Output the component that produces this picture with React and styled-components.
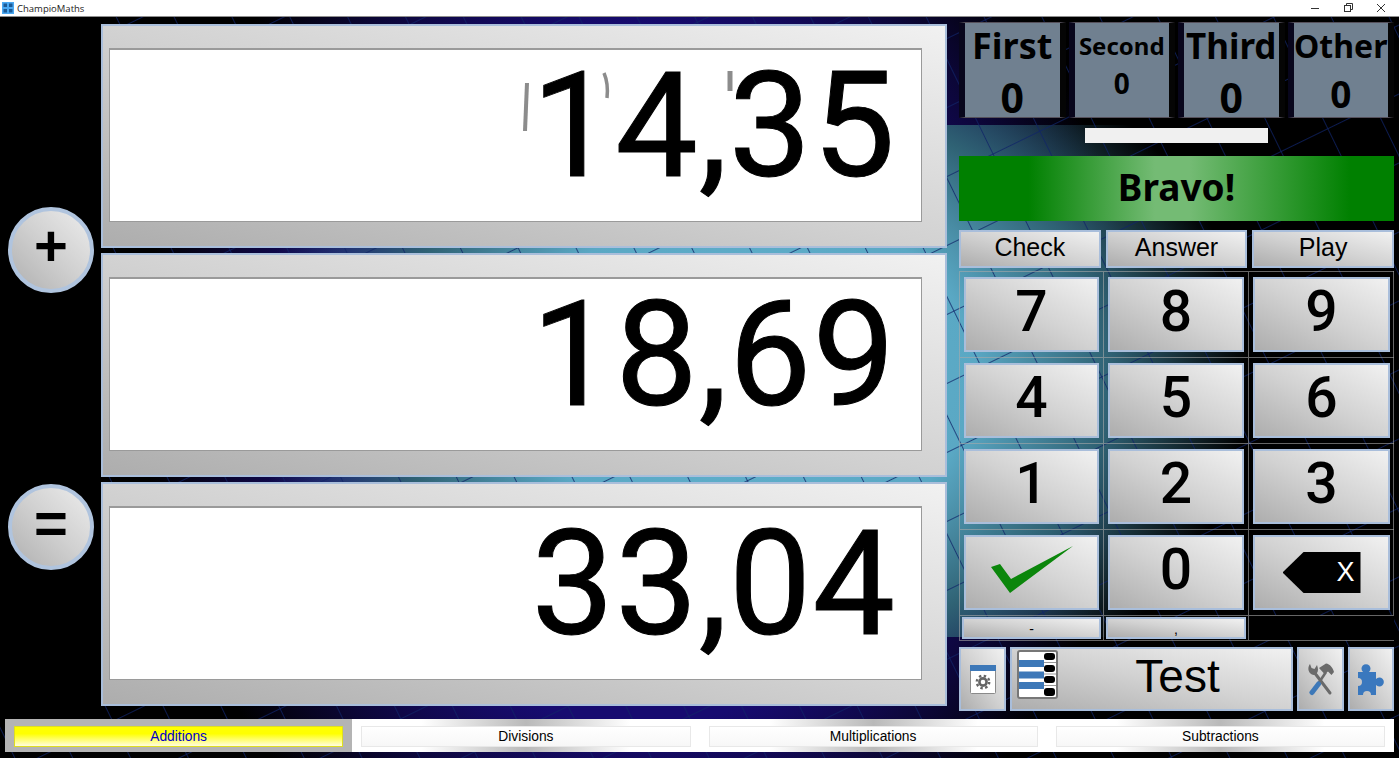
import React from 'react'
import styled, { createGlobalStyle, css } from 'styled-components'

const GlobalStyle = createGlobalStyle`
  * { box-sizing: border-box; }
  html, body { margin: 0; padding: 0; height: 100%; background: #000; overflow: hidden; }
  body { font-family: "Liberation Sans", Arial, sans-serif; }
`

const chrome = css`
  border: 2px solid #a9bedb;
  background: linear-gradient(to top right, #adadad 0%, #d2d2d2 50%, #f1f1f1 100%);
  color: #000;
  display: flex;
  align-items: center;
  justify-content: center;
  font-family: "Liberation Sans", Arial, sans-serif;
  padding: 0;
`

const Window = styled.div`
  width: 1399px;
  height: 758px;
  display: flex;
  flex-direction: column;
  overflow: hidden;
`

const TitleBar = styled.div`
  height: 17px;
  flex: none;
  background: #fff;
  border-bottom: 1px solid #8f8f8f;
  display: flex;
  align-items: center;
  padding-left: 2px;
`

const AppName = styled.span`
  font: 9.5px "Open Sans", sans-serif;
  color: #222;
  margin-left: 3px;
`

const WindowControls = styled.div`
  margin-left: auto;
  display: flex;
  gap: 23px;
  padding-right: 13px;
  align-items: center;
`

const Desktop = styled.div`
  flex: 1;
  position: relative;
  display: flex;
  flex-direction: column;
  background:
    radial-gradient(ellipse 500px 386px at 750px 250px, #63b3cf 0%, #5aa8c4 45%, #2f6274 72%, rgba(20, 40, 70, 0) 100%) 0 108px / 100% 512px no-repeat,
    radial-gradient(ellipse 500px 560px at 640px 360px, #170b70 62%, rgba(15, 8, 70, 0.8) 82%, #000 100%);
`

const Wallpaper = styled.svg`
  position: absolute;
  inset: 0;
  width: 100%;
  height: 100%;
`

const Main = styled.div`
  position: relative;
  height: 702px;
  display: flex;
`

const OperatorRail = styled.div`
  width: 101px;
  flex: none;
  background: #000;
  display: flex;
  flex-direction: column;
  align-items: flex-start;
  gap: 191px;
  padding: 190px 0 0 8px;
`

const Operator = styled.div`
  width: 86px;
  height: 86px;
  border-radius: 50%;
  border: 4px solid #b0c4de;
  background: linear-gradient(to top right, #b0b0b0 0%, #d0d0d0 50%, #ececec 100%);
  display: flex;
  align-items: center;
  justify-content: center;
  font: 700 58px/1 "Liberation Sans", sans-serif;
  padding-bottom: 8px;
  color: #000;
`

const Panels = styled.div`
  width: 846px;
  flex: none;
  padding-top: 7px;
  display: flex;
  flex-direction: column;
  gap: 5px;
`

const Panel = styled.div`
  ${chrome}
  height: 224px;
  padding: 22px 23px 24px 6px;
  align-items: stretch;
`

const Display = styled.div`
  position: relative;
  flex: 1;
  background: #fff;
  border: 1px solid #9a9a9a;
  border-top-width: 2px;
  display: flex;
  align-items: center;
  justify-content: flex-end;
  padding: 0 25px 18px 0;
  font: 400 147px/1 Roboto, sans-serif;
  letter-spacing: 1px;
  -webkit-text-stroke: 1px #000;
  color: #000;
`

const GhostMarks = styled.svg`
  position: absolute;
  left: 410px;
  top: 19px;
`

const Side = styled.div`
  width: 435px;
  margin-left: 12px;
  flex: none;
  padding-top: 5px;
  display: flex;
  flex-direction: column;
`

const Scores = styled.div`
  display: grid;
  grid-template-columns: repeat(4, 1fr);
  gap: 3px;
  height: 96px;
`

const ScoreBox = styled.div`
  background: #708090;
  border: 1px solid #55505a;
  border-left: 6px solid #08061c;
  border-right: 6px solid #050505;
  display: flex;
  flex-direction: column;
  align-items: center;
  padding-top: 3px;
  font-family: "Noto Sans", sans-serif;
  font-weight: 700;
  color: #000;
`

const ScoreLabel = styled.div`
  font-size: ${p => p.$size}px;
  line-height: 40px;
  white-space: nowrap;
`

const ScoreValue = styled.div`
  font-size: ${p => p.$size}px;
  line-height: 40px;
  margin-top: ${p => p.$offset}px;
`

const Progress = styled.div`
  width: 183px;
  height: 15px;
  margin: 10px auto 0;
  background: #f0f0f0;
`

const Banner = styled.div`
  height: 65px;
  margin-top: 13px;
  padding-bottom: 5px;
  background: linear-gradient(90deg, #008000 0%, #008000 16%, #74bb74 45%, #74bb74 53%, #008000 90%, #008000 100%);
  display: flex;
  align-items: center;
  justify-content: center;
  font: 700 37px "Noto Sans", sans-serif;
  color: #000;
`

const Actions = styled.div`
  display: grid;
  grid-template-columns: repeat(3, 1fr);
  gap: 5px;
  margin-top: 9px;
  height: 38px;
`

const ActionButton = styled.button`
  ${chrome}
  font-size: 25px;
  padding-bottom: 4px;
`

const Keypad = styled.div`
  margin-top: 3px;
  display: grid;
  grid-template-columns: 144px 145px 146px;
  grid-template-rows: repeat(4, 86px) 25px;
  border-right: 1px solid rgba(170, 170, 170, 0.6);
  border-bottom: 1px solid rgba(170, 170, 170, 0.6);
`

const KeyCell = styled.div`
  border-top: 1px solid rgba(170, 170, 170, 0.6);
  border-left: 1px solid rgba(170, 170, 170, 0.6);
  padding: ${p => (p.$small ? '1px 2px 1px 2px' : '5px 4px 5px 4px')};
  background: ${p => (p.$empty ? '#000' : 'transparent')};
  display: flex;
`

const Key = styled.button`
  ${chrome}
  flex: 1;
  font: 500 57px Roboto, sans-serif;
  padding-bottom: 6px;
`

const SmallKey = styled.button`
  ${chrome}
  flex: 1;
  font-size: 14px;
  align-items: flex-end;
`

const BackspaceMark = styled.div`
  width: 78px;
  height: 41px;
  margin-top: 6px;
  background: #000;
  clip-path: polygon(0 50%, 27% 0, 100% 0, 100% 100%, 27% 100%);
  color: #fff;
  font: 400 27px "Liberation Sans", sans-serif;
  display: flex;
  align-items: center;
  justify-content: flex-end;
  padding-right: 6px;
`

const Toolbar = styled.div`
  margin-top: 6px;
  height: 62px;
  display: grid;
  grid-template-columns: 47px 1fr 47px 46px;
  gap: 4px;
`

const ToolButton = styled.button`
  ${chrome}
`

const TestButton = styled.button`
  ${chrome}
  position: relative;
  font-size: 46px;
  padding: 0 0 6px 52px;
`

const TestIcon = styled.svg`
  position: absolute;
  left: 5px;
  top: 1px;
`

const TabBar = styled.div`
  position: relative;
  display: grid;
  grid-template-columns: repeat(4, 1fr);
  height: 33px;
  margin: 0 5px 0 5px;
`

const Tab = styled.div`
  padding: 7px 9px 5px;
  display: flex;
  background: ${p => (p.$active
    ? '#b4b4b4'
    : 'linear-gradient(90deg, #fff 0%, #fff 20%, #b9b9b9 50%, #fff 80%, #fff 100%)')};
`

const TabLabel = styled.div`
  flex: 1;
  display: flex;
  align-items: center;
  justify-content: center;
  font-size: 13.8px;
  padding-bottom: 1px;
  color: ${p => (p.$active ? '#0000c8' : '#000')};
  border: 1px solid ${p => (p.$active ? '#dede20' : '#e8e8e8')};
  background: ${p => (p.$active
    ? 'linear-gradient(180deg, #ffff00 0%, #ffff00 35%, #fffde0 100%)'
    : 'linear-gradient(180deg, #fff 0%, #f7f7f7 100%)')};
`

const keyRows = ['7', '8', '9', '4', '5', '6', '1', '2', '3']
const tabs = ['Additions', 'Divisions', 'Multiplications', 'Subtractions']

const AppIcon = () => (
  <svg width="12" height="12" viewBox="0 0 12 12">
    <rect width="12" height="12" fill="#4aa8f2" />
    <rect x="1.5" y="1.5" width="3.5" height="3.5" fill="#1c5a96" />
    <rect x="7" y="1.5" width="3.5" height="3.5" fill="#1c5a96" />
    <rect x="1.5" y="7" width="3.5" height="3.5" fill="#1c5a96" />
    <rect x="7" y="7" width="3.5" height="3.5" fill="#1c5a96" />
  </svg>
)

const CheckMark = () => (
  <svg width="82" height="47" viewBox="0 0 82 47">
    <polygon points="0,21 9,18 20,33 82,0 19,47" fill="#0b860b" />
  </svg>
)

const SettingsIcon = () => (
  <svg width="26" height="29" viewBox="0 0 26 29">
    <rect x="0.5" y="0.5" width="25" height="28" rx="1" fill="#fff" stroke="#8a8a8a" />
    <rect x="0" y="0" width="26" height="6" fill="#3d78b8" />
    <circle cx="13" cy="17" r="3.6" fill="none" stroke="#666" strokeWidth="2.6" />
    <circle cx="13" cy="17" r="6.2" fill="none" stroke="#666" strokeWidth="2.4" strokeDasharray="2.4 2.47" />
  </svg>
)

const ListIcon = () => (
  <TestIcon width="41" height="49" viewBox="0 0 41 49">
    <rect x="1" y="1" width="39" height="47" rx="2" fill="#fff" stroke="#777" strokeWidth="2" />
    <rect x="2" y="10" width="25" height="7" fill="#3d78b8" />
    <rect x="2" y="21.5" width="25" height="7" fill="#3d78b8" />
    <rect x="2" y="32" width="25" height="7" fill="#3d78b8" />
    <path d="M27 12.5H39M27 24H39M27 35.5H39" stroke="#999" strokeWidth="1" />
    <rect x="27" y="3" width="11" height="7" rx="3" fill="#000" />
    <rect x="27" y="15" width="11" height="7" rx="3" fill="#000" />
    <rect x="27" y="26" width="11" height="7" rx="3" fill="#000" />
    <rect x="27" y="38" width="11" height="8" rx="3" fill="#000" />
  </TestIcon>
)

const ToolsIcon = () => (
  <svg width="26" height="33" viewBox="0 0 26 33">
    <path d="M6 9L22 30" stroke="#6a6a6a" strokeWidth="3" strokeLinecap="round" />
    <path d="M2 1C-1 5 0 11 6 12C10 11 11 7 9 2L6.5 6L3.5 5Z" fill="#6a6a6a" />
    <path d="M18 9L10 21" stroke="#6a6a6a" strokeWidth="2.6" />
    <path d="M10.5 21L4 29.5" stroke="#3d78b8" strokeWidth="5" strokeLinecap="round" />
    <path d="M11 5L18 0.5C22 1 25 5 26 9L23.5 12L20 8.5L16.5 11Z" fill="#6a6a6a" />
  </svg>
)

const PuzzleIcon = () => (
  <svg width="26" height="33" viewBox="0 0 26 33">
    <path
      d="M0 9H5A4.5 4.5 0 1 1 11 9H18V16A4.5 4.5 0 1 1 18 22V32H13A4 4 0 1 0 5 32H0V23A4 4 0 1 0 0 15Z"
      fill="#3a78be"
    />
  </svg>
)

const App = () => {
  return (
    <Window>
      <GlobalStyle />
      <TitleBar>
        <AppIcon />
        <AppName>ChampioMaths</AppName>
        <WindowControls>
          <svg width="10" height="10" viewBox="0 0 10 10">
            <path d="M1 5.5H9" stroke="#333" />
          </svg>
          <svg width="10" height="10" viewBox="0 0 10 10" fill="none" stroke="#333">
            <rect x="1.5" y="2.5" width="6" height="6" />
            <path d="M3.5 2.5V0.5H9.5V6.5H7.5" />
          </svg>
          <svg width="10" height="10" viewBox="0 0 10 10">
            <path d="M1 1L9 9M9 1L1 9" stroke="#333" />
          </svg>
        </WindowControls>
      </TitleBar>

      <Desktop>
        <Wallpaper aria-hidden="true">
          <defs>
            <pattern id="floor" width="52" height="62" patternUnits="userSpaceOnUse" patternTransform="rotate(-26)">
              <path d="M0 0H52M0 0V62" stroke="#0f2468" strokeWidth="1.5" fill="none" />
            </pattern>
          </defs>
          <rect width="100%" height="100%" fill="url(#floor)" />
        </Wallpaper>

        <Main>
          <OperatorRail>
            <Operator>+</Operator>
            <Operator>=</Operator>
          </OperatorRail>

          <Panels>
            <Panel>
              <Display>
                <GhostMarks width="220" height="70" viewBox="0 0 220 70">
                  <path d="M7 14L5 62" stroke="#8c8c8c" strokeWidth="4" fill="none" />
                  <path d="M84 4C87 11 88 20 87 29" stroke="#8c8c8c" strokeWidth="3.5" fill="none" />
                  <path d="M210 2V22" stroke="#8c8c8c" strokeWidth="5" fill="none" />
                </GhostMarks>
                14,35
              </Display>
            </Panel>
            <Panel>
              <Display>18,69</Display>
            </Panel>
            <Panel>
              <Display>33,04</Display>
            </Panel>
          </Panels>

          <Side>
            <Scores>
              <ScoreBox>
                <ScoreLabel $size={36}>First</ScoreLabel>
                <ScoreValue $size={41} $offset={11}>0</ScoreValue>
              </ScoreBox>
              <ScoreBox>
                <ScoreLabel $size={24}>Second</ScoreLabel>
                <ScoreValue $size={28} $offset={-3}>0</ScoreValue>
              </ScoreBox>
              <ScoreBox>
                <ScoreLabel $size={35}>Third</ScoreLabel>
                <ScoreValue $size={41} $offset={11}>0</ScoreValue>
              </ScoreBox>
              <ScoreBox>
                <ScoreLabel $size={32}>Other</ScoreLabel>
                <ScoreValue $size={37} $offset={8}>0</ScoreValue>
              </ScoreBox>
            </Scores>

            <Progress />
            <Banner>Bravo!</Banner>

            <Actions>
              <ActionButton>Check</ActionButton>
              <ActionButton>Answer</ActionButton>
              <ActionButton>Play</ActionButton>
            </Actions>

            <Keypad>
              {keyRows.map(k => (
                <KeyCell key={k}>
                  <Key>{k}</Key>
                </KeyCell>
              ))}
              <KeyCell>
                <Key><CheckMark /></Key>
              </KeyCell>
              <KeyCell>
                <Key>0</Key>
              </KeyCell>
              <KeyCell>
                <Key><BackspaceMark>X</BackspaceMark></Key>
              </KeyCell>
              <KeyCell $small>
                <SmallKey>-</SmallKey>
              </KeyCell>
              <KeyCell $small>
                <SmallKey>,</SmallKey>
              </KeyCell>
              <KeyCell $small $empty />
            </Keypad>

            <Toolbar>
              <ToolButton><SettingsIcon /></ToolButton>
              <TestButton>
                <ListIcon />
                Test
              </TestButton>
              <ToolButton><ToolsIcon /></ToolButton>
              <ToolButton><PuzzleIcon /></ToolButton>
            </Toolbar>
          </Side>
        </Main>

        <TabBar>
          {tabs.map((t, i) => (
            <Tab key={t} $active={i === 0}>
              <TabLabel $active={i === 0}>{t}</TabLabel>
            </Tab>
          ))}
        </TabBar>
      </Desktop>
    </Window>
  )
}

export default App
